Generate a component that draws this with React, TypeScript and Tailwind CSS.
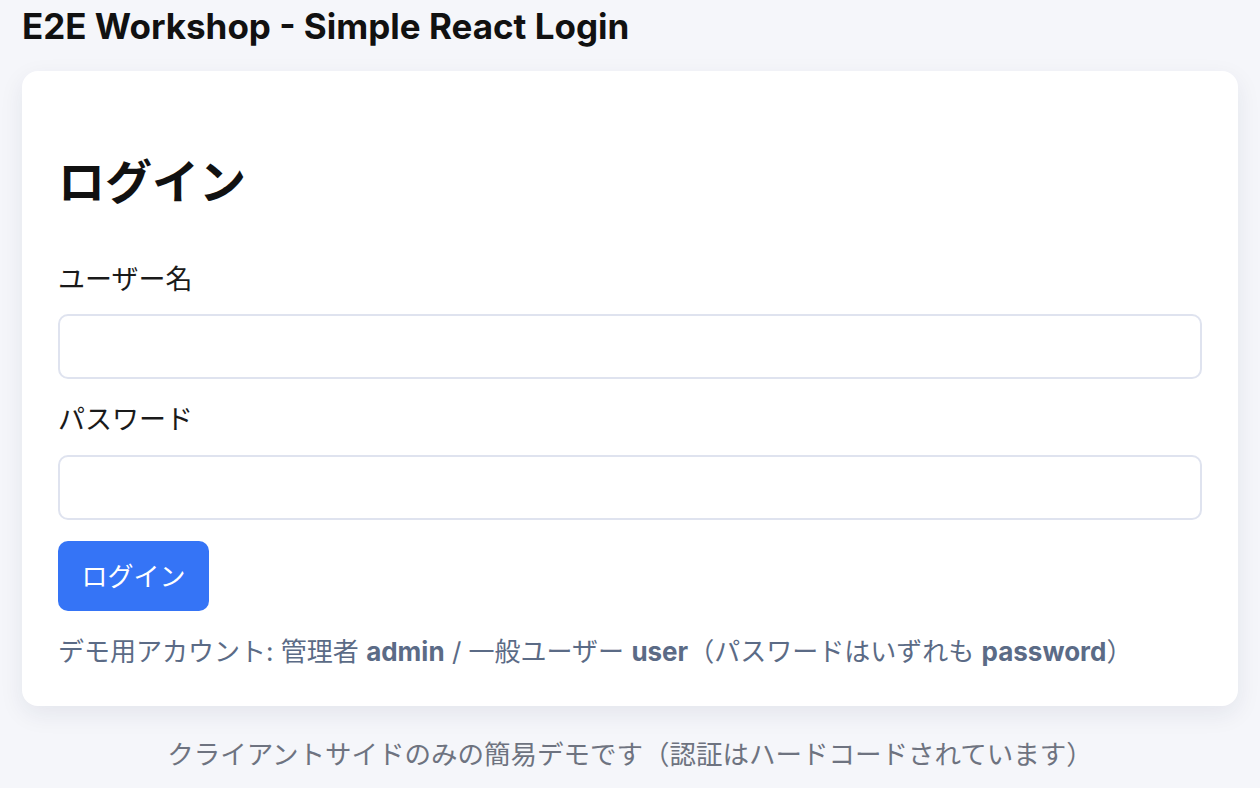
import React, { useState } from "react";

const font = { fontFamily: 'Inter, "Noto Sans CJK JP", sans-serif' };

export default function App() {
    const [username, setUsername] = useState("");
    const [password, setPassword] = useState("");

    return (
        <div className="min-h-screen bg-[#f5f6fa] px-[22px]" style={font}>
            <h1 className="pt-[6px] text-[35px] leading-[40px] font-bold text-[#111111]">
                E2E Workshop - Simple React Login
            </h1>
            <div className="mt-[25px] rounded-2xl bg-white px-9 pt-[82px] pb-[37px] shadow-[0_8px_24px_rgba(30,40,80,0.08)]">
                <h2 className="text-[47px] leading-[58px] font-bold text-[#111111]">ログイン</h2>
                <form className="mt-[51px] flex flex-col" onSubmit={(e) => e.preventDefault()}>
                    <label className="text-[27px] leading-[36px] text-[#1a1a1a]">ユーザー名</label>
                    <input
                        value={username}
                        onChange={(e) => setUsername(e.target.value)}
                        className="mt-4 h-[65px] w-full rounded-[10px] border-2 border-[#dfe3ef] px-4 text-[24px] outline-none"
                    />
                    <label className="mt-[23px] text-[27px] leading-[36px] text-[#1a1a1a]">パスワード</label>
                    <input
                        type="password"
                        value={password}
                        onChange={(e) => setPassword(e.target.value)}
                        className="mt-[17px] h-[65px] w-full rounded-[10px] border-2 border-[#dfe3ef] px-4 text-[24px] outline-none"
                    />
                    <div className="mt-[21px]">
                        <button
                            type="submit"
                            className="h-[70px] w-[151px] rounded-[10px] bg-[#3574f6] text-[26px] text-white"
                        >
                            ログイン
                        </button>
                    </div>
                </form>
                <p className="mt-6 text-[26px] leading-[34px] text-[#5b6b86]">
                    デモ用アカウント: 管理者 <b>admin</b> / 一般ユーザー <b>user</b>（パスワードはいずれも <b>password</b>）
                </p>
            </div>
            <p className="mt-[31px] text-center text-[26.5px] leading-[34px] text-[#6e7380]">
                クライアントサイドのみの簡易デモです（認証はハードコードされています）
            </p>
        </div>
    );
}
